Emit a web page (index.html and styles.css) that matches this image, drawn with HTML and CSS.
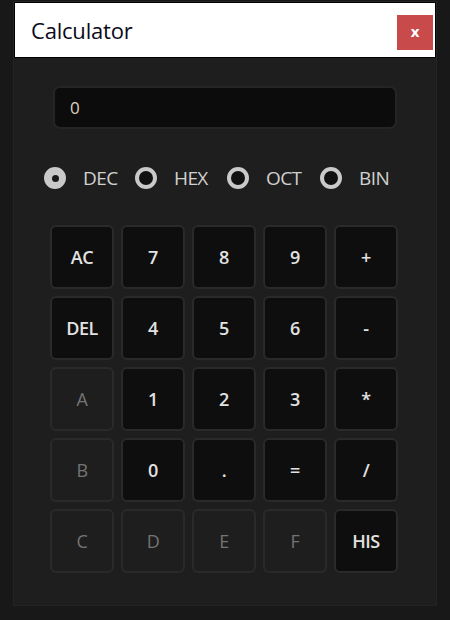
FILE: index.html
```html
<!DOCTYPE html>
<html lang="en">
<head>
<meta charset="utf-8">
<title>Calculator</title>
<link rel="stylesheet" href="styles.css">
</head>
<body>
<div class="window">
  <div class="titlebar">
    <span class="title">Calculator</span>
    <button class="close">x</button>
  </div>
  <div class="content">
    <div class="display">0</div>
    <div class="radios">
      <label class="radio"><span class="dot checked"></span><span class="rlabel">DEC</span></label>
      <label class="radio"><span class="dot"></span><span class="rlabel">HEX</span></label>
      <label class="radio"><span class="dot"></span><span class="rlabel">OCT</span></label>
      <label class="radio"><span class="dot"></span><span class="rlabel">BIN</span></label>
    </div>
    <div class="keys">
      <button class="key">AC</button>
      <button class="key">7</button>
      <button class="key">8</button>
      <button class="key">9</button>
      <button class="key">+</button>
      <button class="key">DEL</button>
      <button class="key">4</button>
      <button class="key">5</button>
      <button class="key">6</button>
      <button class="key">-</button>
      <button class="key off">A</button>
      <button class="key">1</button>
      <button class="key">2</button>
      <button class="key">3</button>
      <button class="key">*</button>
      <button class="key off">B</button>
      <button class="key">0</button>
      <button class="key">.</button>
      <button class="key">=</button>
      <button class="key">/</button>
      <button class="key off">C</button>
      <button class="key off">D</button>
      <button class="key off">E</button>
      <button class="key off">F</button>
      <button class="key">HIS</button>
    </div>
  </div>
</div>
</body>
</html>
```
FILE: styles.css
```css
html, body {
  margin: 0;
  padding: 0;
  background: #181818;
  height: 100%;
}
body {
  font-family: "Open Sans", "Noto Sans", sans-serif;
  padding-top: 2px;
  box-sizing: border-box;
}
.window {
  margin-left: 14px;
  width: 422px;
  height: 603px;
  background: #1e1e1e;
  box-shadow: 0 0 0 1px #242424;
  display: flex;
  flex-direction: column;
}
.titlebar {
  height: 56px;
  background: #ffffff;
  border: 1px solid #000;
  box-sizing: border-box;
  display: flex;
  align-items: center;
  justify-content: space-between;
  padding: 0 2px 0 16px;
}
.title {
  font-size: 22px;
  color: #0a0a1a;
  letter-spacing: -0.2px;
}
.close {
  width: 36px;
  height: 35px;
  margin-top: 4px;
  border: none;
  background: #c94a4b;
  color: #fff;
  font-family: "Open Sans", sans-serif;
  font-weight: 700;
  font-size: 15px;
  padding: 0 0 2px;
}
.content {
  padding: 28px 0 0 0;
  display: flex;
  flex-direction: column;
  align-items: center;
}
.display {
  width: 344px;
  height: 43px;
  box-sizing: border-box;
  background: #0c0c0c;
  border: 2px solid #252525;
  border-radius: 7px;
  color: #ddd3bd;
  font-size: 17px;
  padding-left: 15px;
  display: flex;
  align-items: center;
}
.radios {
  margin-top: 36px;
  align-self: flex-start;
  margin-left: 30px;
  display: grid;
  grid-template-columns: 91px 92px 93px 70px;
  height: 24px;
}
.radio {
  display: flex;
  align-items: center;
  gap: 17px;
  color: #d0d0d0;
  font-size: 19px;
}
.dot {
  flex: none;
  width: 22px;
  height: 22px;
  box-sizing: border-box;
  border-radius: 50%;
  border: 4px solid #c9c9c9;
  background: #111;
  position: relative;
}
.dot.checked {
  background: #c9c9c9;
}
.dot.checked::after {
  content: "";
  position: absolute;
  left: 3.5px;
  top: 3.5px;
  width: 7px;
  height: 7px;
  border-radius: 50%;
  background: #1a1a1a;
}
.rlabel {
  letter-spacing: -0.6px;
}
.keys {
  margin-top: 36px;
  align-self: flex-start;
  margin-left: 36px;
  display: grid;
  grid-template-columns: repeat(5, 64px);
  grid-auto-rows: 64px;
  gap: 7px;
}
.key {
  background: #0e0e0e;
  border: 2px solid #2a2a2a;
  border-radius: 6px;
  color: #e2e2e2;
  font-family: "Open Sans", "Noto Sans", sans-serif;
  font-weight: 600;
  font-size: 18px;
  padding: 0;
  letter-spacing: -0.5px;
}
.key.off {
  background: #1e1e1e;
  color: #747474;
  font-weight: 400;
}
```
